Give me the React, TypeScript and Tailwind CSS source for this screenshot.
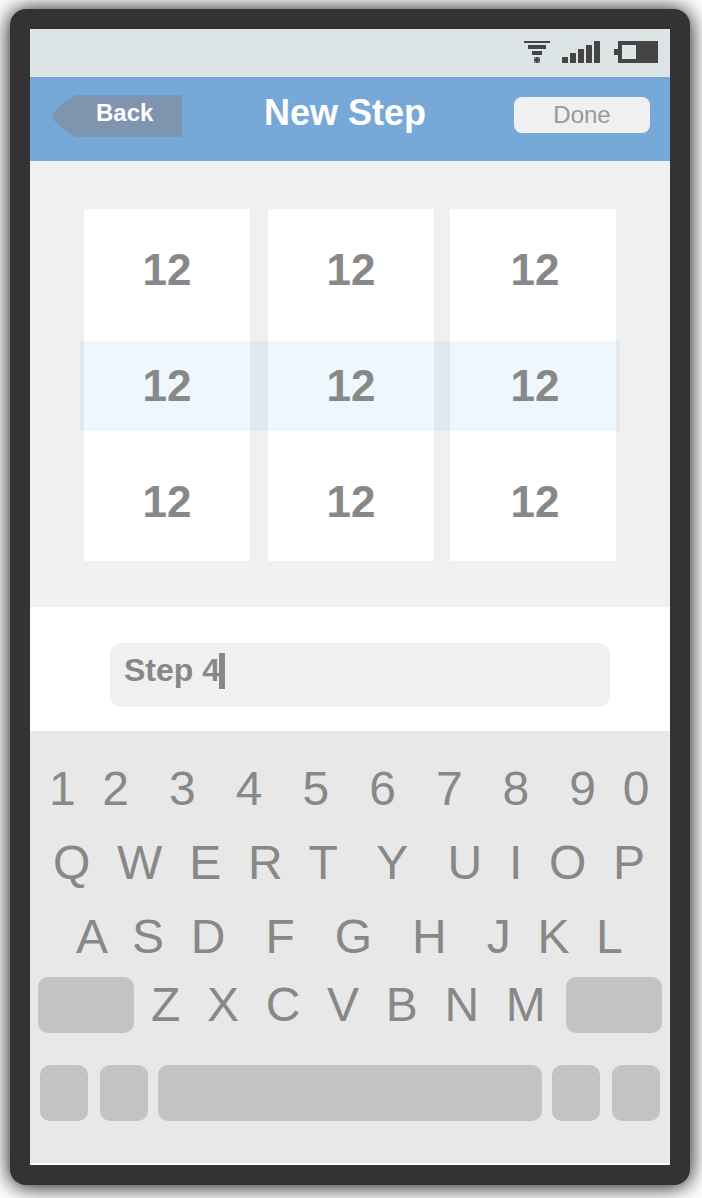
import React from "react";

const KEY_ROWS = [
  { text: "1  2   3   4   5   6   7   8   9  0", className: "pl-[19px]" },
  { text: "Q  W  E  R  T   Y   U  I  O  P", className: "pl-[23px] tracking-[0.03px]" },
  { text: "A  S  D   F   G   H   J  K  L", className: "pl-[46px]" },
];

function StatusBar() {
  return (
    <div className="flex h-12 items-start justify-end bg-[#dce4e6] pt-3 pr-3">
      <svg width="134" height="22" viewBox="0 0 134 22" fill="#444444" shapeRendering="crispEdges">
        <rect x="0" y="0" width="26" height="2" />
        <rect x="4" y="4" width="18" height="4" />
        <rect x="8" y="10" width="10" height="4" />
        <rect x="10" y="16" width="6" height="6" opacity="0.6" />
        <rect x="12" y="16" width="2" height="6" />
        <rect x="10" y="18" width="6" height="2" />
        <rect x="38" y="16" width="6" height="6" />
        <rect x="46" y="12" width="6" height="10" />
        <rect x="54" y="8" width="6" height="14" />
        <rect x="62" y="4" width="6" height="18" />
        <rect x="70" y="0" width="6" height="22" />
        <path fillRule="evenodd" d="M94 0H134V22H94V14H90V8H94ZM98 4V18H112V4Z" />
      </svg>
    </div>
  );
}

function Header() {
  return (
    <header className="flex h-[84px] items-start bg-[#76a9d8] pl-[22px]">
      <button className="mt-[18px] flex h-[42px] w-[130px] text-2xl font-bold text-white">
        <svg width="24" height="42" viewBox="0 0 24 42" fill="#7f94af">
          <path d="M24 0C15 4 6 11 1 18.500Q-1 21 1 23.500C6 31 15 38 24 42Z" />
        </svg>
        <span className="h-[42px] flex-1 bg-[#7f94af] pl-[20px] text-left leading-[36px]">Back</span>
      </button>
      <h1 className="ml-[82px] w-[250px] pt-[15px] text-[36px] leading-[42px] font-bold text-white">
        New Step
      </h1>
      <button className="mt-5 h-9 w-[136px] rounded-[8px] bg-[#f0f0f0] text-2xl leading-[36px] text-[#999999]">
        Done
      </button>
    </header>
  );
}

function PickerColumn({ className }: { className: string }) {
  return (
    <div className={"flex h-[352px] w-[166px] flex-col bg-white pt-[3px] text-center text-[44px] leading-[116px] font-bold text-[#888888] " + className}>
      <span className="relative z-10">12</span>
      <span className="relative z-10">12</span>
      <span className="relative z-10">12</span>
    </div>
  );
}

function Picker() {
  return (
    <section className="relative flex h-[446px] items-start bg-[#f0f0f0] pt-12 pl-[54px]">
      <PickerColumn className="mr-[18px]" />
      <PickerColumn className="mr-4" />
      <PickerColumn className="pl-1" />
      <div className="absolute top-[180px] left-[50px] h-[90px] w-[540px] bg-[rgba(85,175,238,0.1)]" />
    </section>
  );
}

function NameField() {
  return (
    <section className="h-[124px] bg-white pt-9 pl-20">
      <div className="flex h-16 w-[500px] items-start rounded-[12px] bg-[#f0f0f0] pl-[14px] text-[32px] leading-[54px] font-bold text-[#888888]">
        <span>Step 4</span>
        <span className="mt-[10px] -ml-px h-9 w-[6px] bg-[#888888]" />
      </div>
    </section>
  );
}

function Keyboard() {
  return (
    <section className="h-[432px] bg-[#e8e8e8] pt-[21px] text-[48px] text-[#888888]">
      {KEY_ROWS.map((row) => (
        <div key={row.text} className={"h-[74px] leading-[74px] whitespace-pre " + row.className}>
          {row.text}
        </div>
      ))}
      <div className="mt-[3px] flex h-14 justify-between px-2">
        <div className="h-14 w-24 rounded-[10px] bg-[#c3c3c3]" />
        <div className="w-[400px] pl-px leading-[56px] whitespace-pre">Z  X  C  V  B  N  M</div>
        <div className="h-14 w-24 rounded-[10px] bg-[#c3c3c3]" />
      </div>
      <div className="mt-8 flex h-14 pl-[10px]">
        <div className="mr-3 w-12 rounded-[10px] bg-[#c3c3c3]" />
        <div className="mr-[10px] w-12 rounded-[10px] bg-[#c3c3c3]" />
        <div className="mr-[10px] w-96 rounded-[10px] bg-[#c3c3c3]" />
        <div className="mr-3 w-12 rounded-[10px] bg-[#c3c3c3]" />
        <div className="w-12 rounded-[10px] bg-[#c3c3c3]" />
      </div>
    </section>
  );
}

export default function App() {
  return (
    <div className="h-[1198px] w-[702px] overflow-hidden bg-white px-[10px] pt-[9px] font-['Liberation_Sans',Arial,sans-serif]">
      <main className="h-[1176px] w-[680px] rounded-[16px] bg-[#333333] p-5 shadow-[0_1px_22px_#000000]">
        <div className="h-[1136px] bg-white">
          <StatusBar />
          <Header />
          <Picker />
          <NameField />
          <Keyboard />
        </div>
      </main>
    </div>
  );
}
